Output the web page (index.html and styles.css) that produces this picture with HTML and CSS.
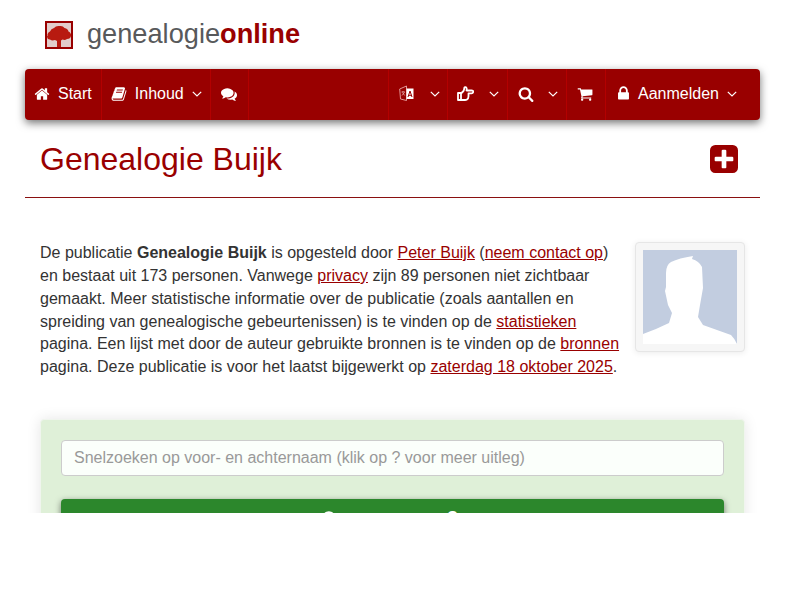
FILE: index.html
```html
<!DOCTYPE html>
<html lang="nl">
<head>
    <meta charset="UTF-8">
    <meta name="viewport" content="width=device-width, initial-scale=1.0">
    <title>Genealogie Buijk</title>
    <link rel="stylesheet" href="styles.css">
</head>
<body>
    <div class="page">
        <header class="brand">
            <svg class="brand-logo" viewBox="0 0 28 28">
                <rect x="1" y="1" width="26" height="26" fill="#e2cdcb" stroke="#990000" stroke-width="2"/>
                <path d="M2.500 15q-.5-3 2.500-4.500 1-3 4-3.500 2-2.500 5.500-2 3.500-.5 5 2 3.500.5 4 3.500 3 1.500 2.500 4.500-.5 3-4 3-2 1.500-4.500.5l-1.500 1v6.500h-4V20l-2-1q-3 1-5-.5-3 0-3-3.500z" fill="#b81a10"/>
            </svg>
            <span class="brand-name">genealogie<strong>online</strong></span>
        </header>

        <nav class="navbar">
            <a class="nav-item nav-start" href="#">
                <svg class="icon" viewBox="0 0 1792 1792"><path d="M1472 992v480q0 26-19 45t-45 19h-384v-384h-256v384h-384q-26 0-45-19t-19-45v-480q0-1 .5-3t.5-3l575-474 575 474q1 2 1 6zm223-69l-62 74q-8 9-21 11h-3q-13 0-21-7l-692-577-692 577q-12 8-24 7-13-2-21-11l-62-74q-8-10-7-23.5t11-21.5l719-599q32-26 76-26t76 26l244 204v-195q0-14 9-23t23-9h192q14 0 23 9t9 23v408l219 182q10 8 11 21.5t-7 23.5z"/></svg>
                Start
            </a>
            <a class="nav-item" href="#">
                <svg class="icon" viewBox="0 0 1792 1792"><path d="M1703 478q40 57 18 129l-275 906q-19 64-76.5 107.5t-122.5 43.5h-923q-77 0-148.5-53.5t-99.5-131.5q-24-67-2-127 0-4 3-27t4-37q1-8-3-21.5t-3-19.5q2-11 8-21t16.5-23.5 16.5-23.5q23-38 45-91.5t30-91.5q3-10 .5-30t-.5-28q3-11 17-28t17-23q21-36 42-92t25-90q1-9-2.5-32t.5-28q4-13 22-30.5t22-22.5q19-26 42.5-84.5t27.5-96.5q1-8-3-25.5t-2-26.5q2-8 9-18t18-23 17-21q8-12 16.5-30.5t15-35 16-36 19.5-32 26.5-23.5 36-11.5 47.5 5.5l-1 3q38-9 51-9h761q74 0 114 56t18 130l-274 906q-36 119-71.5 153.5t-128.5 34.5h-869q-27 0-38 15-11 16-1 43 24 70 144 70h923q29 0 56-15.5t35-41.5l300-987q7-22 5-57 38 15 59 43zm-1064 2q-4 13 2 22.5t20 9.5h608q13 0 25.5-9.5t16.5-22.5l21-64q4-13-2-22.5t-20-9.5h-608q-13 0-25.5 9.5t-16.5 22.5zm-83 256q-4 13 2 22.5t20 9.5h608q13 0 25.5-9.5t16.5-22.5l21-64q4-13-2-22.5t-20-9.5h-608q-13 0-25.5 9.5t-16.5 22.5z"/></svg>
                Inhoud
                <svg class="chevron" viewBox="0 0 10 6"><path d="M.8.8 5 5l4.2-4.2"/></svg>
            </a>
            <a class="nav-item nav-chat" href="#">
                <svg class="icon" viewBox="0 0 1792 1792"><path d="M1408 768q0 139-94 257t-256.5 186.5-353.5 68.5q-86 0-176-16-124 88-278 128-36 9-86 16h-3q-11 0-20.5-8t-11.5-21q-1-3-1-6.5t.5-6.5 2-6l2.5-5 3.5-5.5 4-5 4.5-5 4-4.5q5-6 23-25t26-29.5 22.5-29 25-38.5 20.5-44q-124-72-195-177t-71-224q0-139 94-257t256.5-186.5 353.5-68.5 353.5 68.5 256.5 186.5 94 257zm384 256q0 120-71 224.5t-195 176.5q10 24 20.5 44t25 38.5 22.5 29 26 29.5 23 25q1 1 4 4.5t4.5 5 4 5 3.5 5.5l2.5 5 2 6 .5 6.5-1 6.5q-3 14-13 22t-22 7q-50-7-86-16-154-40-278-128-90 16-176 16-271 0-472-132 58 4 88 4 161 0 309-45t264-129q125-92 192-212t67-254q0-77-23-152 129 71 204 178t75 230z"/></svg>
            </a>

            <a class="nav-item nav-lang" href="#">
                <svg class="icon icon-lang" viewBox="0 0 15 17">
                    <path d="M.7 4 7.500 1v14.500L1.500 14z" fill="none" stroke="#e8a8a8" stroke-width=".9"/>
                    <path d="M2.500 7h3.500M4 6v1M3 10.500l2.500-3.200M3.500 7.500l2.200 3" fill="none" stroke="#e8a8a8" stroke-width=".8"/>
                    <path d="M7.500 3.500h7v10.500h-7z"/>
                    <path d="M9 12l2-6 2 6M9.800 10.300h2.400" fill="none" stroke="#990000" stroke-width="1"/>
                </svg>
                <svg class="chevron" viewBox="0 0 10 6"><path d="M.8.8 5 5l4.2-4.2"/></svg>
            </a>
            <a class="nav-item nav-hand" href="#">
                <svg class="icon icon-hand" viewBox="0 0 17 15">
                    <path d="M1 7h3v7H1zM4 7.500l2.500-2.500q.6-1 .8-3 .2-1 1.200-.8 1.700.4 1 3.300h5q2 0 1.700 1.500-.2 1.300-1.700 1.300h-3v3q0 2.300-1.500 3.200-.8.500-2 .5H4" fill="none" stroke="#fff" stroke-width="1.800" stroke-linejoin="round"/>
                </svg>
                <svg class="chevron" viewBox="0 0 10 6"><path d="M.8.8 5 5l4.2-4.2"/></svg>
            </a>
            <a class="nav-item nav-find" href="#">
                <svg class="icon" viewBox="0 0 1792 1792"><path d="M1216 832q0-185-131.500-316.500t-316.500-131.500-316.500 131.500-131.500 316.500 131.500 316.500 316.500 131.500 316.500-131.500 131.500-316.500zm512 832q0 52-38 90t-90 38q-54 0-90-38l-343-342q-179 124-399 124-143 0-273.500-55.500t-225-150-150-225-55.500-273.500 55.500-273.500 150-225 225-150 273.500-55.500 273.500 55.500 225 150 150 225 55.500 273.500q0 220-124 399l343 343q37 37 37 90z"/></svg>
                <svg class="chevron" viewBox="0 0 10 6"><path d="M.8.8 5 5l4.2-4.2"/></svg>
            </a>
            <a class="nav-item nav-cart" href="#">
                <svg class="icon" viewBox="0 0 1792 1792"><path d="M704 1536q0 52-38 90t-90 38-90-38-38-90 38-90 90-38 90 38 38 90zm896 0q0 52-38 90t-90 38-90-38-38-90 38-90 90-38 90 38 38 90zm128-1088v512q0 24-16.500 42.500t-40.500 21.500l-1044 122q13 60 13 70 0 16-24 64h920q26 0 45 19t19 45-19 45-45 19h-1024q-26 0-45-19t-19-45q0-11 8-31.500t16-36 21.500-40 15.500-29.500l-177-823h-204q-26 0-45-19t-19-45 19-45 45-19h256q16 0 28.500 6.500t19.500 15.500 13 24.500 8 26 5.500 29.500 4.500 26h1201q26 0 45 19t19 45z"/></svg>
            </a>
            <a class="nav-item nav-login" href="#">
                <svg class="icon icon-lock" viewBox="0 0 1792 1792"><path d="M640 768h512v-192q0-106-75-181t-181-75-181 75-75 181v192zm832 96v576q0 40-28 68t-68 28h-960q-40 0-68-28t-28-68v-576q0-40 28-68t68-28h32v-192q0-184 132-316t316-132 316 132 132 316v192h32q40 0 68 28t28 68z"/></svg>
                Aanmelden
                <svg class="chevron" viewBox="0 0 10 6"><path d="M.8.8 5 5l4.2-4.2"/></svg>
            </a>
        </nav>

        <div class="title-row">
            <h1>Genealogie Buijk</h1>
            <svg class="title-plus" viewBox="128 128 1536 1536"><path d="M1408 960v-128q0-26-19-45t-45-19h-320v-320q0-26-19-45t-45-19h-128q-26 0-45 19t-19 45v320h-320q-26 0-45 19t-19 45v128q0 26 19 45t45 19h320v320q0 26 19 45t45 19h128q26 0 45-19t19-45v-320h320q26 0 45-19t19-45zm256-544v960q0 119-84.500 203.500t-203.500 84.500h-960q-119 0-203.500-84.500t-84.500-203.500v-960q0-119 84.500-203.500t203.500-84.500h960q119 0 203.500 84.500t84.500 203.500z"/></svg>
        </div>

        <section class="intro">
            <div class="avatar">
                <svg viewBox="0 0 94 94">
                    <rect width="94" height="94" fill="#c2cde0"/>
                    <path d="M50 6Q36 8 28 12q-5 3-5 11v14l-1 4 3 14 4 8-3 10Q14 79 0 84v10h94q-2-5-6-9L60 75l-5-8 2-12 3-17-1-21q-3-6-10-8z" fill="#fff"/>
                </svg>
            </div>
            <p>De publicatie <strong>Genealogie Buijk</strong> is opgesteld door <a href="#">Peter Buijk</a> (<a href="#">neem contact op</a>) en bestaat uit 173 personen. Vanwege <a href="#">privacy</a> zijn 89 personen niet zichtbaar gemaakt. Meer statistische informatie over de publicatie (zoals aantallen en spreiding van genealogische gebeurtenissen) is te vinden op de <a href="#">statistieken</a> pagina. Een lijst met door de auteur gebruikte bronnen is te vinden op de <a href="#">bronnen</a> pagina. Deze publicatie is voor het laatst bijgewerkt op <a href="#">zaterdag 18 oktober 2025</a>.</p>
        </section>

        <form class="search-card">
            <input class="search-input" type="text" placeholder="Snelzoeken op voor- en achternaam (klik op ? voor meer uitleg)">
            <button class="search-button" type="button">
                <svg class="icon" viewBox="0 0 1792 1792"><path d="M1216 832q0-185-131.500-316.500t-316.500-131.500-316.500 131.500-131.500 316.500 131.500 316.500 316.500 131.500 316.500-131.500 131.500-316.500zm512 832q0 52-38 90t-90 38q-54 0-90-38l-343-342q-179 124-399 124-143 0-273.500-55.500t-225-150-150-225-55.500-273.500 55.500-273.500 150-225 225-150 273.500-55.500 273.500 55.500 225 150 150 225 55.500 273.500q0 220-124 399l343 343q37 37 37 90z"/></svg>
                <span>?</span>
            </button>
        </form>
    </div>
</body>
</html>
```

FILE: styles.css
```css
body {
    margin: 0;
    background-color: #fff;
    font-family: "Liberation Sans", Arial, sans-serif;
    font-size: 16px;
    line-height: 1.428;
    color: #333;
}
a {
    color: #990000;
}
.page {
    width: 735px;
    height: 513px;
    padding: 0 25px;
    overflow: hidden;
}
.brand {
    display: flex;
    align-items: center;
    gap: 14px;
    height: 69px;
    padding-left: 20px;
}
.brand-logo {
    width: 28px;
    height: 28px;
}
.brand-name {
    font-size: 27.2px;
    color: #58595b;
}
.brand-name strong {
    color: #990000;
}
.navbar {
    display: flex;
    height: 51px;
    background-color: #990000;
    border-radius: 4px;
    box-shadow: 0 3px 8px rgba(0, 0, 0, 0.55);
}
.nav-item {
    display: flex;
    align-items: center;
    gap: 8px;
    padding: 0 8px 0 9px;
    border-left: 1px solid #b30000;
    color: #fff;
    text-decoration: none;
}
.nav-item svg {
    margin-bottom: 2px;
}
.nav-start {
    padding: 0 9px;
    border-left: none;
}
.nav-chat {
    padding: 0 11px 0 10px;
    border-right: 1px solid #b30000;
}
.nav-lang,
.nav-hand {
    gap: 15px;
}
.nav-lang {
    margin-left: auto;
    padding: 0 7px 0 10px;
    gap: 16px;
}
.nav-find {
    gap: 14px;
    padding-left: 10px;
}
.nav-cart {
    padding: 0 12px 0 10px;
}
.nav-login {
    padding: 0 23px 0 9px;
}
.icon {
    flex-shrink: 0;
    width: 16px;
    height: 16px;
    fill: #fff;
}
.icon-lang {
    width: 15px;
    height: 17px;
}
.icon-hand {
    width: 17px;
    height: 15px;
}
.icon-lock {
    width: 17px;
    height: 17px;
    margin-right: -2px;
}
.chevron {
    width: 10px;
    height: 6px;
    fill: none;
    stroke: #fff;
    stroke-width: 1.2;
}
.title-row {
    display: flex;
    align-items: center;
    justify-content: space-between;
    height: 77px;
    padding: 0 22px 0 15px;
    border-bottom: 1px solid #8a1010;
}
h1 {
    margin: 2px 0 0;
    font-size: 32px;
    font-weight: normal;
    color: #990000;
}
.title-plus {
    width: 28px;
    height: 28px;
    fill: #990000;
}
.intro {
    padding: 44px 15px 0;
}
.intro p {
    margin: 0;
}
.avatar {
    float: right;
    margin-left: 15px;
    padding: 7px;
    background-color: #f6f6f6;
    border: 1px solid #e6e6e6;
    border-radius: 4px;
    box-shadow: 0 1px 6px rgba(0, 0, 0, 0.08);
}
.avatar svg {
    display: block;
    width: 94px;
    height: 94px;
}
.search-card {
    margin: 40px 15px 0;
    padding: 20px;
    background-color: #dff0d8;
    border: 1px solid #f0f5ee;
    border-radius: 4px;
    box-shadow: 0 0 14px rgba(0, 0, 0, 0.1);
}
.search-input {
    display: block;
    box-sizing: border-box;
    width: 100%;
    height: 36px;
    padding: 6px 12px;
    background-color: #fbfffb;
    border: 1px solid #ccc;
    border-radius: 4px;
    font-family: inherit;
    font-size: 16px;
}
.search-input::placeholder {
    color: #999;
}
.search-button {
    display: flex;
    align-items: flex-start;
    justify-content: center;
    gap: 109px;
    width: 100%;
    height: 44px;
    margin-top: 23px;
    padding: 11px 5px 0 0;
    background-color: #2c872c;
    border: none;
    border-radius: 4px;
    box-shadow: 0 2px 6px rgba(0, 0, 0, 0.5);
    color: #fff;
    font-family: inherit;
    font-size: 18px;
    font-weight: bold;
    line-height: 16px;
}
```
